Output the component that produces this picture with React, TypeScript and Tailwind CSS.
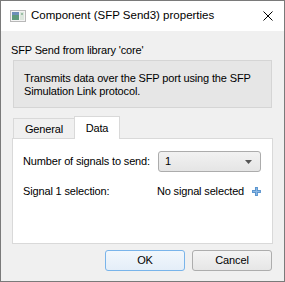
export default function App() {
  return (
    <div className="w-[285px] h-[282px] flex flex-col border border-[#7a7a7a] bg-[#f0f0f0] text-[11px] tracking-[-0.15px] whitespace-nowrap text-black font-['Segoe_UI','Liberation_Sans',sans-serif]">
      <div className="h-[30px] bg-white flex items-center shrink-0">
        <svg className="ml-[9px]" width="16" height="12" viewBox="0 0 16 12">
          <rect x="0.5" y="0.5" width="15" height="11" fill="#f4f4f4" stroke="#b8b8b8" />
          <rect x="2" y="2" width="7" height="8" fill="#5f9a7c" />
          <rect x="2" y="2" width="7" height="3" fill="#6d8fb8" />
          <rect x="10" y="2" width="4" height="8" fill="#dce6dd" />
          <rect x="11" y="3" width="2" height="2" fill="#9bbfa6" />
        </svg>
        <span className="ml-[5px] -mt-[1px] text-[11.5px] tracking-normal leading-none">Component (SFP Send3) properties</span>
        <svg className="ml-auto mr-[11px]" width="10" height="10" viewBox="0 0 10 10">
          <path d="M0.5 0.5L9.5 9.5M9.5 0.5L0.5 9.5" stroke="#000" strokeWidth="1" />
        </svg>
      </div>
      <div className="flex-1 flex flex-col px-[11px]">
        <div className="pt-[11px] -ml-[1px] leading-[16px]">SFP Send from library 'core'</div>
        <div className="mt-[2px] mx-[1px] h-[48px] bg-[#e6e6e6] border border-[#d5d5d5] pl-[10px] pt-[11px] leading-[13px]">
          Transmits data over the SFP port using the SFP
          <br />
          Simulation Link protocol.
        </div>
        <div className="mt-[8px] flex items-end h-[22px] pl-[1px]">
          <div className="h-[20px] w-[62px] border border-[#d9d9d9] border-b-0 bg-[#f0f0f0] flex items-center justify-center pt-[1px]">
            General
          </div>
          <div className="h-[23px] w-[46px] -mb-[1px] relative z-10 border border-[#d9d9d9] border-b-0 bg-white flex items-center justify-center -ml-[1px]">
            Data
          </div>
        </div>
        <div className="h-[106px] bg-white border border-[#d9d9d9] pl-[10px] pr-[11px] pt-[12px]">
          <div className="flex items-center h-[21px]">
            <span className="w-[135px]">Number of signals to send:</span>
            <div className="flex-1 h-[21px] rounded-[3px] border border-[#acacac] bg-gradient-to-b from-[#f2f2f2] to-[#e5e5e5] flex items-center pl-[6px] pr-[8px]">
              <span>1</span>
              <svg className="ml-auto" width="7" height="4" viewBox="0 0 7 4">
                <path d="M0 0H7L3.5 4Z" fill="#555" />
              </svg>
            </div>
          </div>
          <div className="flex items-center h-[16px] mt-[11px]">
            <span className="w-[135px]">Signal 1 selection:</span>
            <span>No signal selected</span>
            <svg className="ml-[8px]" width="9" height="9" viewBox="0 0 9 9">
              <path d="M3 0H6V3H9V6H6V9H3V6H0V3H3Z" fill="#5b95cf" />
              <path d="M4 1H5V4H8V5H5V8H4V5H1V4H4Z" fill="#8cb8e4" />
            </svg>
          </div>
        </div>
        <div className="mt-[6px] flex justify-end gap-[7px] mr-[1px]">
          <button className="w-[80px] h-[21px] rounded-[3px] border border-[#79b4ea] bg-gradient-to-b from-[#f2f7fc] to-[#e4eef8] leading-none">
            OK
          </button>
          <button className="w-[80px] h-[21px] rounded-[3px] border border-[#adadad] bg-gradient-to-b from-[#f4f4f4] to-[#e6e6e6] leading-none">
            Cancel
          </button>
        </div>
      </div>
    </div>
  );
}
